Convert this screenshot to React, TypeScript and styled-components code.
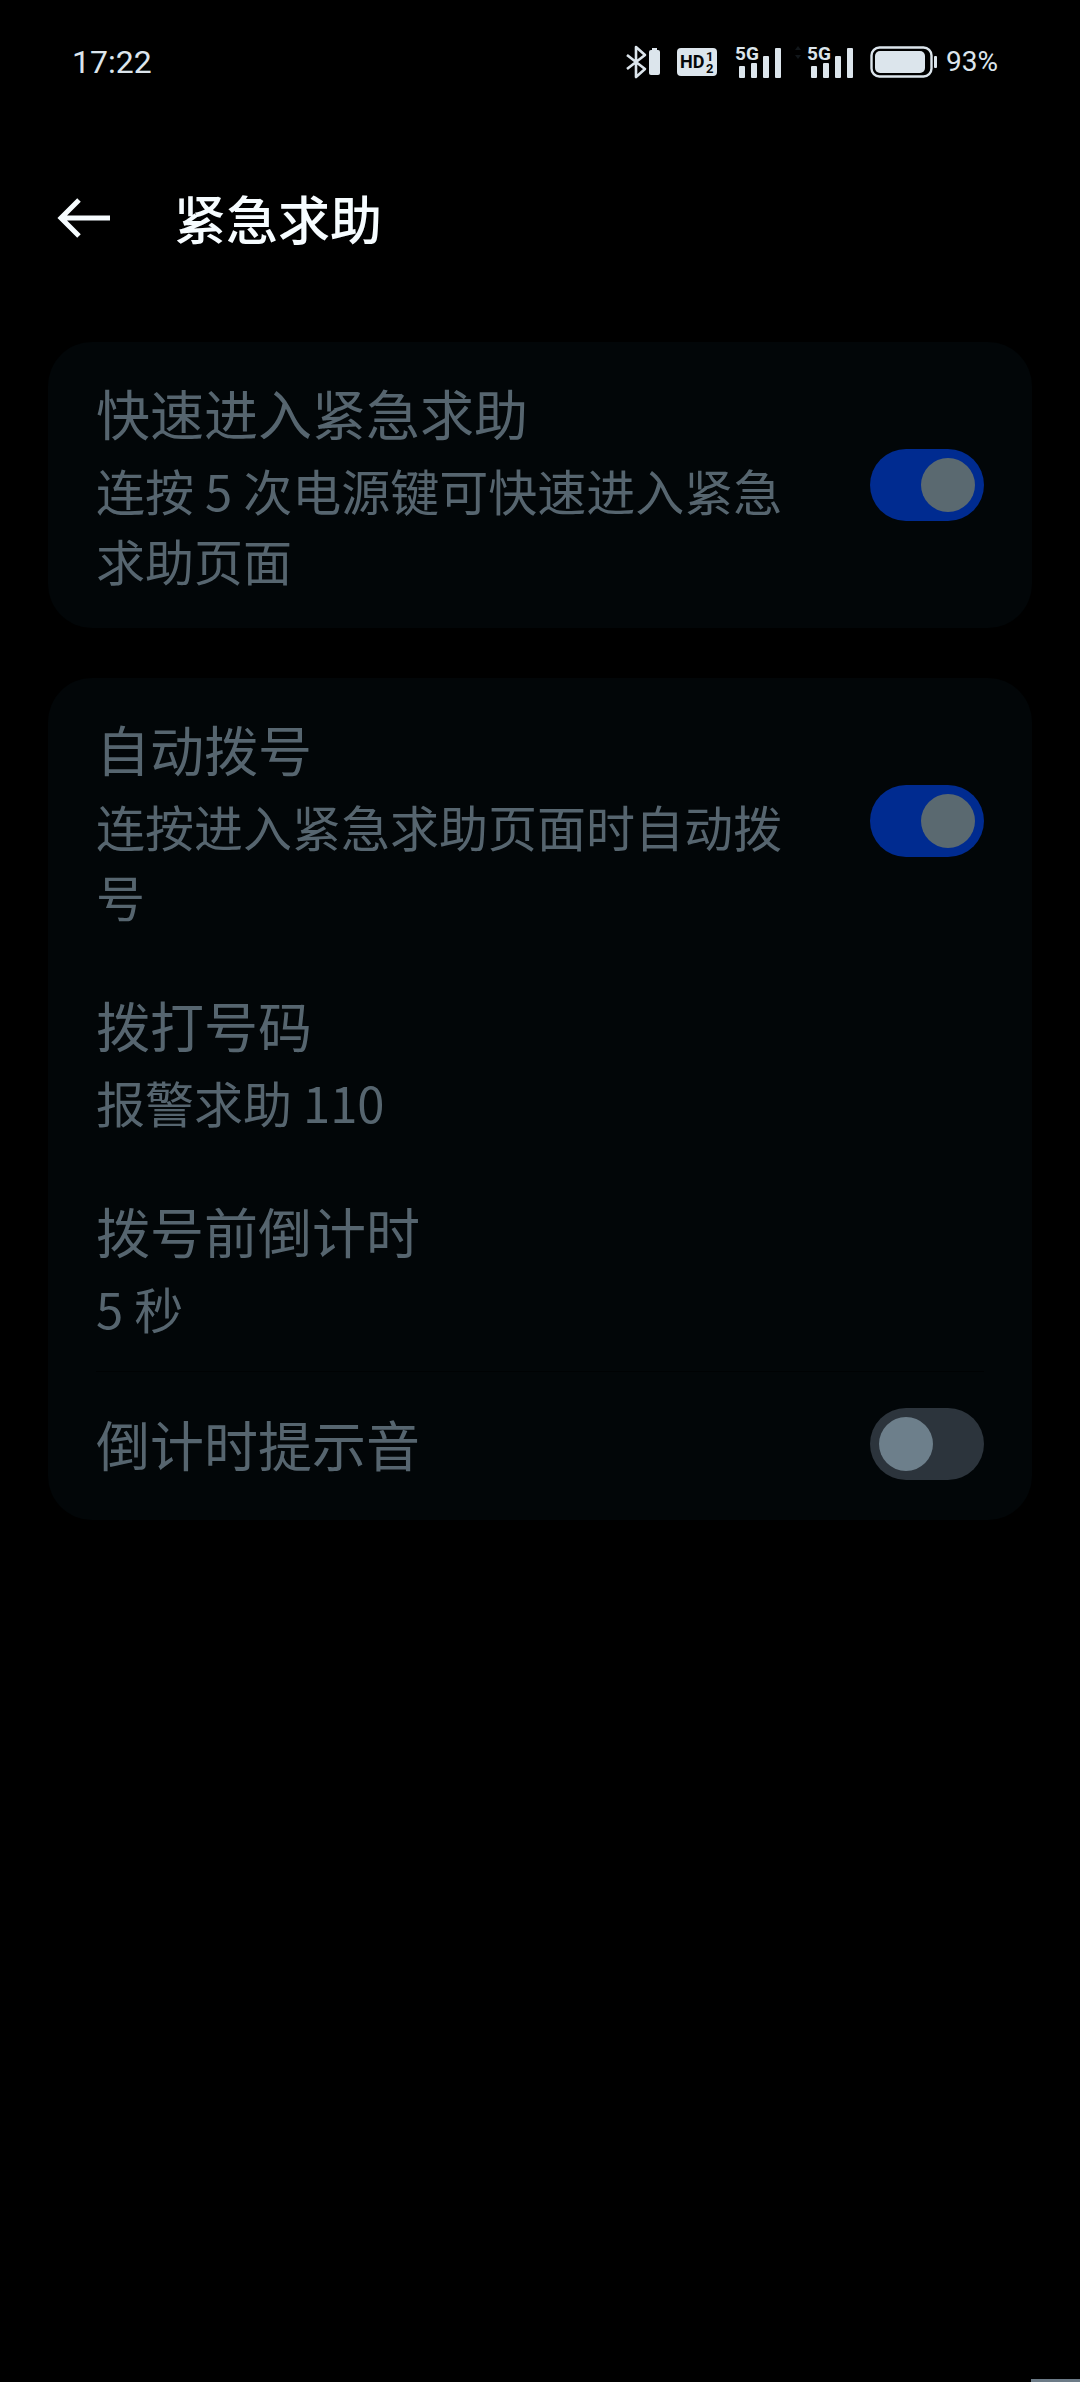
import { useId, useState } from "react";
import styled, { createGlobalStyle } from "styled-components";

const ink = "#dce5ec";
const badgeFont = '"Roboto", sans-serif';

const GlobalStyle = createGlobalStyle`
  *, *::before, *::after { box-sizing: border-box; }
  body {
    margin: 0;
    background: #000;
    font-family: "Noto Sans CJK SC", "Noto Sans", sans-serif;
  }
  h1, h2, p { margin: 0; font-weight: 400; }
`;

const Screen = styled.div`
  position: relative;
  min-height: 100vh;
  overflow: hidden;
  background: #000;
`;

const StatusBar = styled.div`
  display: flex;
  align-items: center;
  justify-content: space-between;
  height: 124px;
  padding: 0 82px 0 72px;
  color: ${ink};
`;

const Clock = styled.time`
  font: 400 32px/40px "Roboto", sans-serif;
`;

const StatusIcons = styled.div`
  display: flex;
  align-items: center;
  gap: 16px;
`;

const BatteryGroup = styled.div`
  display: flex;
  align-items: center;
  gap: 9px;
`;

const Percent = styled.span`
  font: 400 28px/40px "Roboto", sans-serif;
`;

const Glyph = styled.svg`
  display: block;
  flex: none;
  overflow: visible;
`;

const Header = styled.header`
  display: flex;
  align-items: center;
  gap: 64px;
  height: 188px;
  padding: 0 56px;
`;

const BackButton = styled.button`
  flex: none;
  padding: 0;
  border: 0;
  background: none;
  color: #f6fcff;
  cursor: pointer;
`;

const PageTitle = styled.h1`
  color: #f6fcff;
  font-size: 52px;
  font-weight: 500;
  line-height: 76px;
`;

const Content = styled.main`
  display: flex;
  flex-direction: column;
  gap: 50px;
  padding: 30px 48px;
`;

const Card = styled.section`
  padding: 5px 48px;
  border-radius: 44px;
  background: #020608;
`;

const Row = styled.div<{ $divided?: boolean }>`
  display: flex;
  align-items: center;
  justify-content: space-between;
  gap: 80px;
  min-height: 144px;
  padding: 28px 0;
  border-top: ${(p) => (p.$divided ? "1px solid #000203" : "0")};
`;

const RowText = styled.div`
  display: flex;
  flex-direction: column;
  gap: 4px;
  min-width: 0;
  color: #56656f;
`;

const RowTitle = styled.h2`
  font-size: 54px;
  line-height: 76px;
`;

const RowNote = styled.p`
  font-size: 49px;
  line-height: 70px;
`;

const Switch = styled.input`
  appearance: none;
  display: flex;
  flex: none;
  align-items: center;
  width: 114px;
  height: 72px;
  margin: 0;
  padding: 0 9px;
  border-radius: 36px;
  background: #2c343c;
  cursor: pointer;

  &::before {
    content: "";
    width: 54px;
    height: 54px;
    border-radius: 50%;
    background: #6d7f8b;
  }

  &:checked {
    justify-content: flex-end;
    background: #002b90;
  }

  &:checked::before {
    background: #5a6970;
  }
`;

const EdgeHandle = styled.div`
  position: absolute;
  right: 0;
  bottom: 0;
  width: 49px;
  height: 3px;
  background: #6c7b87;
`;

function BluetoothIcon() {
  return (
    <Glyph width="35" height="34" viewBox="0 0 35 34" aria-label="蓝牙">
      <path d="M1 10 L19 24 L10 32 V2 L19 10 L1 24" fill="none" stroke={ink} strokeWidth="2.6" strokeLinejoin="round" />
      <rect x="23" y="5" width="11" height="25" rx="2" fill={ink} />
      <rect x="26" y="3" width="5" height="2" fill={ink} />
    </Glyph>
  );
}

function HdIcon() {
  return (
    <Glyph width="40" height="28" viewBox="0 0 40 28">
      <rect width="40" height="28" rx="4" fill={ink} />
      <g fill="#050709" fontFamily={badgeFont} fontWeight="700">
        <text x="3" y="20" fontSize="18">HD</text>
        <text x="29" y="13" fontSize="13">1</text>
        <text x="29" y="25" fontSize="13">2</text>
      </g>
    </Glyph>
  );
}

function SignalIcon({ data, width }: { data?: boolean; width: number }) {
  return (
    <Glyph width={width} height="34" viewBox={`0 0 ${width} 34`}>
      <g transform={`translate(${width - 46} 0)`} fill={ink}>
        {data && <path d="M-13 5 L-10 1 L-7 5 Z M-13 10 L-10 14 L-7 10 Z" fill="#11161a" />}
        <text x="-1" y="15" fontFamily={badgeFont} fontWeight="700" fontSize="19">5G</text>
        <rect x="3" y="21" width="6" height="12" rx="1" />
        <rect x="15" y="18" width="6" height="15" rx="1" />
        <rect x="27" y="11" width="6" height="22" rx="1" />
        <rect x="39" y="3" width="6" height="30" rx="1" />
      </g>
    </Glyph>
  );
}

function BatteryIcon() {
  return (
    <Glyph width="67" height="32" viewBox="0 0 67 32" aria-label="电量">
      <rect x="1.5" y="1.5" width="60" height="29" rx="8" fill="none" stroke={ink} strokeWidth="2.4" />
      <rect x="5" y="5" width="50" height="22" rx="5" fill={ink} />
      <rect x="64" y="10" width="3" height="12" rx="1" fill={ink} />
    </Glyph>
  );
}

function BackArrow() {
  return (
    <Glyph width="54" height="44" viewBox="0 0 54 44">
      <path d="M54 22 H5 M23 4 L5 22 L23 40" fill="none" stroke="currentColor" strokeWidth="5" />
    </Glyph>
  );
}

type SettingProps = { title: string; note?: string; on?: boolean; divided?: boolean };

function Setting({ title, note, on, divided }: SettingProps) {
  const id = useId();
  const [checked, setChecked] = useState(Boolean(on));
  return (
    <Row $divided={divided}>
      <RowText>
        <RowTitle>{on === undefined ? title : <label htmlFor={id}>{title}</label>}</RowTitle>
        {note && <RowNote>{note}</RowNote>}
      </RowText>
      {on !== undefined && (
        <Switch id={id} type="checkbox" role="switch" checked={checked} onChange={(e) => setChecked(e.target.checked)} />
      )}
    </Row>
  );
}

export default function App() {
  return (
    <Screen lang="zh-CN">
      <GlobalStyle />
      <StatusBar>
        <Clock>17:22</Clock>
        <StatusIcons>
          <BluetoothIcon />
          <HdIcon />
          <SignalIcon width={49} />
          <SignalIcon width={56} data />
          <BatteryGroup>
            <BatteryIcon />
            <Percent>93%</Percent>
          </BatteryGroup>
        </StatusIcons>
      </StatusBar>
      <Header>
        <BackButton type="button" aria-label="返回">
          <BackArrow />
        </BackButton>
        <PageTitle>紧急求助</PageTitle>
      </Header>
      <Content>
        <Card>
          <Setting title="快速进入紧急求助" note="连按 5 次电源键可快速进入紧急求助页面" on />
        </Card>
        <Card>
          <Setting title="自动拨号" note="连按进入紧急求助页面时自动拨号" on />
          <Setting title="拨打号码" note="报警求助 110" />
          <Setting title="拨号前倒计时" note="5 秒" />
          <Setting title="倒计时提示音" on={false} divided />
        </Card>
      </Content>
      <EdgeHandle />
    </Screen>
  );
}
